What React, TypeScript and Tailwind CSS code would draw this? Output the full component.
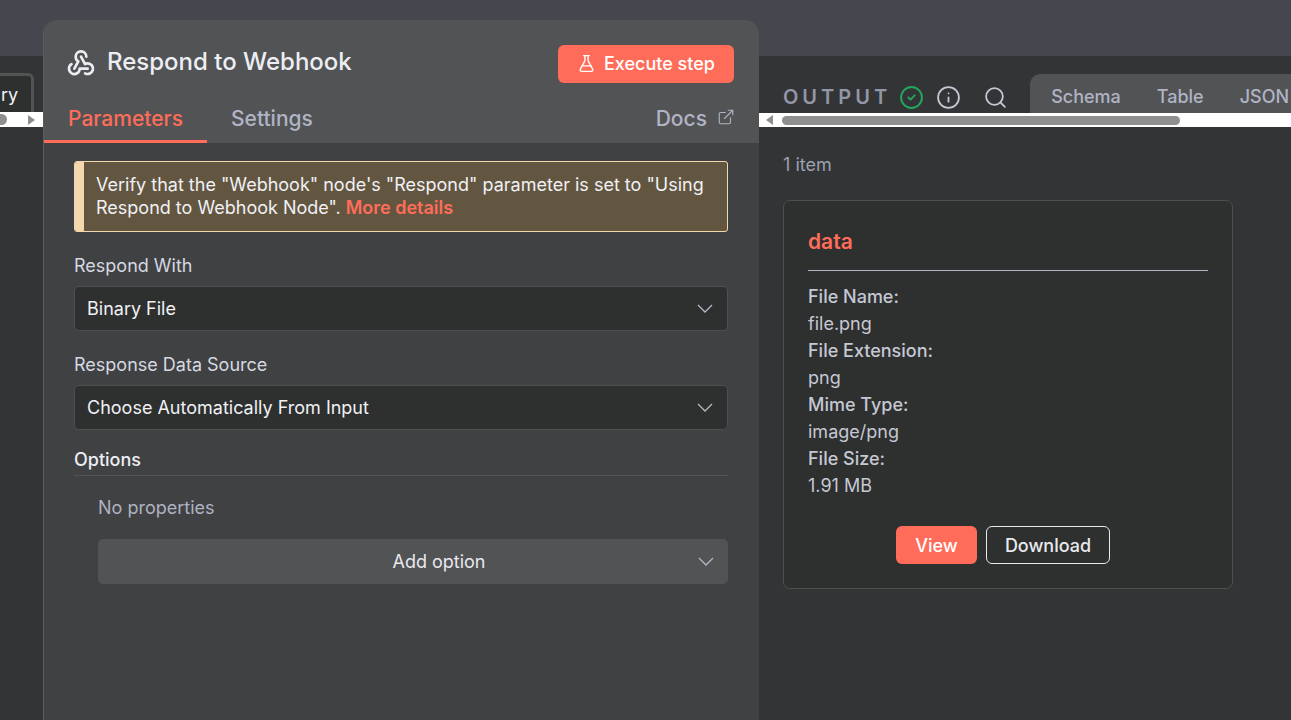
import { CircleCheck, ExternalLink, FlaskConical, Info, Search } from "lucide-react";
import { TbWebhook } from "react-icons/tb";

function Chevron() {
  return (
    <svg width="16" height="9" viewBox="0 0 16 9" fill="none" className="text-[#b5b8c4]">
      <path d="M1 1l7 7 7-7" stroke="currentColor" strokeWidth="1.3" />
    </svg>
  );
}

function Select({ label }: { label: string }) {
  return (
    <div className="flex h-[45px] items-center justify-between rounded-[5px] border border-[#4e4f50] bg-[#2e2f2f] pl-3 pr-[14px] text-[18px] text-[#f0f1f5]">
      <span>{label}</span>
      <Chevron />
    </div>
  );
}

function Field({ name, value }: { name: string; value: string }) {
  return (
    <>
      <div className="h-[27px] font-medium text-[#c5c8d3]">{name}</div>
      <div className="h-[27px] text-[#c5c8d3]">{value}</div>
    </>
  );
}

export default function App() {
  return (
    <div className="flex h-[720px] w-[1291px] overflow-hidden bg-[linear-gradient(#46464f_56px,#333436_56px)] font-['Inter',sans-serif] text-[18px] leading-[27px]">
      <div className="flex w-[43px] flex-col">
        <div className="h-14" />
        <div className="flex h-[56px] justify-end overflow-hidden pt-[17px] pr-[9px]">
          <div className="h-[50px] w-[60px] shrink-0 rounded-[6px] border-[3px] border-[#525355] bg-[#2e2f2f] pl-[24px] pt-[5px] text-[#f0f1f5]">
            ry
          </div>
        </div>
        <div className="flex h-[15px] items-center bg-white">
          <div className="h-[11px] w-[7px] rounded-r-full bg-[#8f8f8f]" />
          <div className="ml-[21px] h-0 w-0 border-y-[5px] border-l-[7px] border-y-transparent border-l-[#8f8f8f]" />
        </div>
      </div>

      <div className="mt-5 flex h-[700px] w-[716px] shrink-0 flex-col rounded-t-[14px] border-l border-[#5a5b5d] bg-[#404143]">
        <div className="h-[123px] rounded-t-[14px] bg-[#525355]">
          <div className="flex h-[80px] items-start justify-between pl-6 pr-[25px]">
            <div className="flex items-center gap-[10px] pt-6 text-[24px] font-medium leading-[36px] text-[#eceef4]">
              <TbWebhook size={32} className="-ml-[3px]" />
              <span>Respond to Webhook</span>
            </div>
            <div className="mt-[25px] flex h-[38px] w-[176px] items-center justify-center gap-[8px] rounded-[6px] bg-[#ff6d5a] pb-[1px] text-[18px] font-medium text-white">
              <FlaskConical size={19} strokeWidth={1.75} />
              <span>Execute step</span>
            </div>
          </div>
          <div className="flex h-[43px] items-start pr-6">
            <div className="mt-[1px] flex h-[42px] w-[163px] justify-center border-b-[3px] border-[#ff6d5a] pt-[4px] text-[21px] font-medium text-[#ff6d5a]">
              Parameters
            </div>
            <div className="ml-6 pt-[5px] text-[21px] font-medium text-[#b0b4c4]">Settings</div>
            <div className="ml-auto flex items-center gap-[10px] pt-[5px] text-[21px] font-medium text-[#b0b4c4]">
              <span>Docs</span>
              <ExternalLink size={18} strokeWidth={1.5} className="mb-[3px]" />
            </div>
          </div>
        </div>

        <div className="flex flex-col pl-[30px] pr-[31px]">
          <div className="mt-[18px] flex h-[71px] overflow-hidden rounded-[3px] border border-[#f2d8ac] bg-[#635641]">
            <div className="w-[9px] shrink-0 bg-[#f2d8ac]" />
            <div className="pl-3 pt-[11px] text-[18px] leading-[23px] text-[#f0f1f5]">
              Verify that the "Webhook" node's "Respond" parameter is set to "Using Respond to Webhook Node".{" "}
              <span className="font-semibold text-[#ff6d5a]">More details</span>
            </div>
          </div>

          <div className="mt-[19px] h-[35px] pt-[1px] text-[#d6d8e1]">Respond With</div>
          <Select label="Binary File" />
          <div className="mt-[19px] h-[35px] pt-[1px] text-[#d6d8e1]">Response Data Source</div>
          <Select label="Choose Automatically From Input" />

          <div className="mt-4 h-[30px] border-b border-[#535456] font-medium text-[#eceef4]">Options</div>

          <div className="pl-6">
            <div className="mt-[18px] text-[#aeb2c1]">No properties</div>
            <div className="relative mt-[18px] flex h-[45px] items-center justify-center rounded-[5px] bg-[#525355] pl-[52px] text-[#e8e9ee]">
              <span>Add option</span>
              <div className="absolute right-[14px] top-[18px] flex">
                <Chevron />
              </div>
            </div>
          </div>
        </div>
      </div>

      <div className="flex min-w-0 flex-1 flex-col">
        <div className="h-14" />
        <div className="flex h-[57px] items-end">
          <div className="flex h-[40px] flex-1 items-center pl-6">
            <span className="pt-[8px] text-[20px] font-semibold tracking-[4px] text-[#9296a6]">OUTPUT</span>
            <CircleCheck size={25} strokeWidth={1.9} className="ml-[8px] mt-[8px] text-[#24a65d]" />
            <Info size={25} strokeWidth={1.75} className="ml-[12px] mt-[8px] text-[#c5c8d3]" />
            <Search size={25} strokeWidth={1.75} className="ml-[22px] mt-[8px] text-[#c5c8d3]" />
            <div className="ml-[22px] flex h-[39px] flex-1 items-center gap-[36px] self-end rounded-tl-[10px] bg-[#525355] pl-[21px] pt-[6px] font-medium text-[#b0b4c4]">
              <span>Schema</span>
              <span>Table</span>
              <span>JSON</span>
            </div>
          </div>
        </div>
        <div className="flex h-[14px] items-center bg-white">
          <div className="ml-[7px] h-0 w-0 border-y-[5px] border-r-[7px] border-y-transparent border-r-[#8f8f8f]" />
          <div className="ml-[9px] h-[9px] w-[398px] rounded-full bg-[#8f8f8f]" />
        </div>

        <div className="flex flex-1 flex-col pl-6">
          <div className="mt-6 text-[#9ca0b0]">1 item</div>
          <div className="mt-[22px] h-[389px] w-[450px] rounded-[7px] border border-[#4e4f50] bg-[#2e2f2f] px-6 pt-[24px]">
            <div className="h-[46px] border-b border-[#b0b4c4] text-[21px] font-semibold leading-[33px] text-[#ff6d5a]">data</div>
            <div className="mt-[12px]">
              <Field name="File Name:" value="file.png" />
              <Field name="File Extension:" value="png" />
              <Field name="Mime Type:" value="image/png" />
              <Field name="File Size:" value="1.91 MB" />
            </div>
            <div className="mt-[27px] flex justify-center gap-[9px] pr-[10px] font-medium">
              <div className="flex h-[38px] w-[81px] items-center justify-center rounded-[6px] bg-[#ff6d5a] text-white">View</div>
              <div className="flex h-[38px] w-[124px] items-center justify-center rounded-[6px] border border-[#e8e9ee] text-[#e8e9ee]">Download</div>
            </div>
          </div>
        </div>
      </div>
    </div>
  );
}
